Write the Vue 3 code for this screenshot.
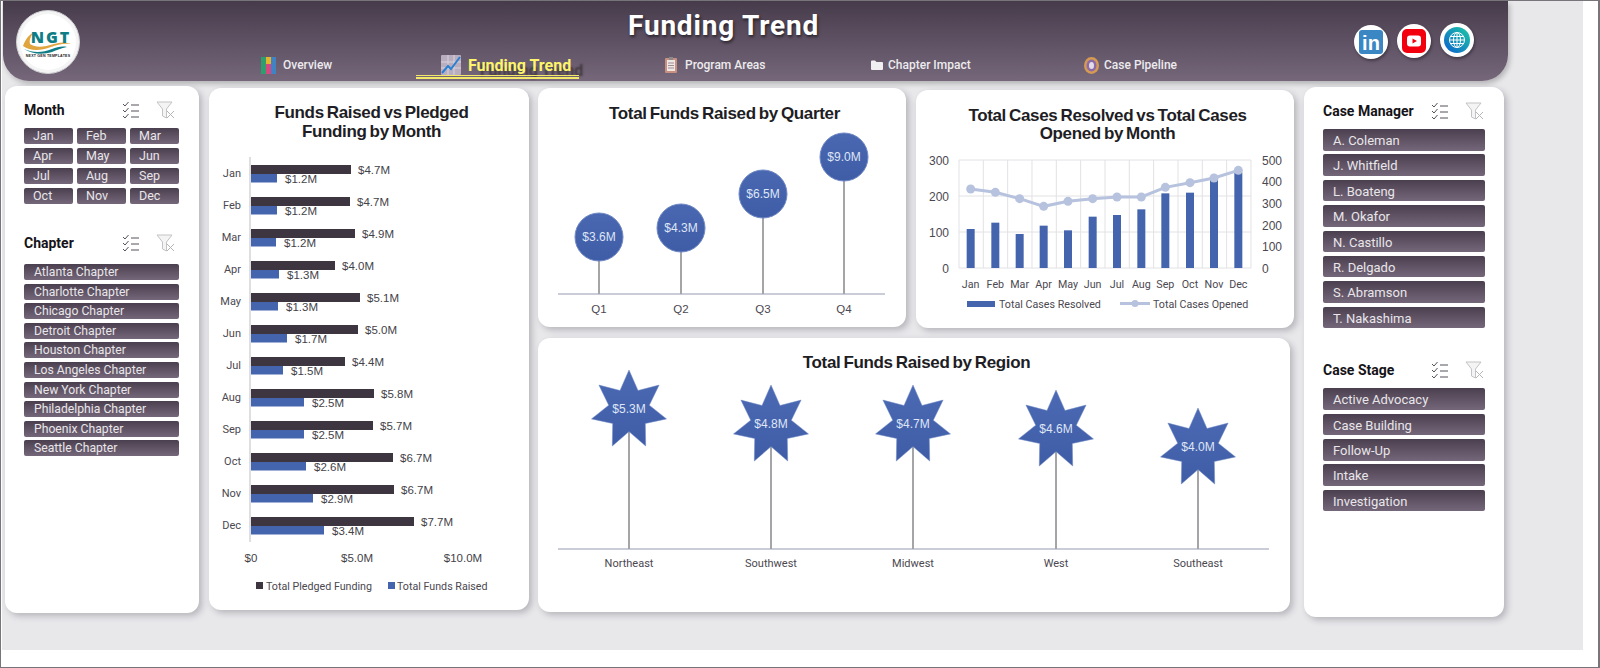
<template>
  <div class="shell">
    <div class="canvas">
      <header class="header">
        <div class="logo">
          <svg width="64" height="64" viewBox="0 0 64 64">
            <circle cx="32" cy="32" r="31.5" fill="#f4f4f4" stroke="#cfcfd2" />
            <circle cx="32" cy="32" r="28" fill="#fff" />
            <path d="M7 36c3-8 6-11 10-13-3 4-4 8-3 11 6 4 14 3 24 0 6-2 12-2 17 0-8-1-14 1-20 3-11 4-21 4-28-1z" fill="#e0a53f" />
            <path d="M8 39c9 4 18 4 28 0 5-2 10-3 15-2-6 1-10 3-15 5-10 3-20 2-28-3z" fill="#0f7d86" />
            <text x="35" y="33" class="logo-mark" text-anchor="middle">NGT</text>
            <text x="32" y="47" class="logo-sub" text-anchor="middle">NEXT GEN TEMPLATES</text>
          </svg>
        </div>
        <div class="head-mid">
          <h1 class="page-title">Funding Trend</h1>
          <nav class="nav">
            <a class="nav-item">
              <svg width="15" height="17" viewBox="0 0 15 17">
                <rect x="0" y="0" width="5" height="17" fill="#2f9e6e" />
                <rect x="5" y="0" width="5" height="7" fill="#e6b32e" />
                <rect x="5" y="7" width="5" height="10" fill="#d8477e" />
                <rect x="10" y="0" width="5" height="17" fill="#3f83c4" />
              </svg>
              <span>Overview</span>
            </a>
            <a class="nav-item active">
              <svg width="20" height="20" viewBox="0 0 20 20">
                <rect x="0" y="0" width="20" height="20" rx="1" fill="#b9aebf" />
                <path d="M0 7h20M0 13h20M7 0v20M13 0v20" stroke="#d8d2dc" stroke-width="1" />
                <path d="M1 18l6-7 3 3 9-12" fill="none" stroke="#2a7fd0" stroke-width="2" />
              </svg>
              <span>Funding Trend</span>
            </a>
            <a class="nav-item">
              <svg width="12" height="16" viewBox="0 0 12 16">
                <rect x="0" y="1" width="12" height="15" rx="1" fill="#c98f80" />
                <rect x="2" y="3" width="8" height="11" fill="#efe7e4" />
                <rect x="4" y="0" width="4" height="3" fill="#8a8a8a" />
                <path d="M3 6h6M3 8.500h6M3 11h6" stroke="#9b8f95" stroke-width="1" />
              </svg>
              <span>Program Areas</span>
            </a>
            <a class="nav-item">
              <svg width="12" height="10" viewBox="0 0 12 10">
                <path d="M0 1.500a1 1 0 0 1 1-1h3l1.500 1.500h5.500a1 1 0 0 1 1 1v6a1 1 0 0 1-1 1h-10a1 1 0 0 1-1-1z" fill="#f1eff2" />
              </svg>
              <span>Chapter Impact</span>
            </a>
            <a class="nav-item">
              <svg width="15" height="17" viewBox="0 0 15 17">
                <ellipse cx="7.500" cy="8.500" rx="7.500" ry="8.500" fill="#d69b52" />
                <ellipse cx="7.500" cy="8.500" rx="5" ry="6" fill="#8c6aa8" />
                <ellipse cx="7.500" cy="8.500" rx="2.500" ry="3.500" fill="#e4dbe8" />
              </svg>
              <span>Case Pipeline</span>
            </a>
          </nav>
        </div>
        <div class="socials">
          <div class="social">
            <svg width="24" height="24" viewBox="0 0 24 24">
              <rect width="24" height="24" rx="3" fill="#3b87c4" />
              <text x="12" y="20" class="in-mark" text-anchor="middle">in</text>
            </svg>
          </div>
          <div class="social up1">
            <svg width="24" height="24" viewBox="0 0 24 24">
              <rect width="24" height="24" rx="5" fill="#f3000f" />
              <rect x="5" y="6.500" width="14" height="11" rx="3" fill="#fff" />
              <path d="M10.500 9.500l4.500 2.500-4.500 2.500z" fill="#f3000f" />
            </svg>
          </div>
          <div class="social up2">
            <svg width="26" height="26" viewBox="0 0 26 26">
              <defs>
                <linearGradient id="webGrad" x1="1" y1="0" x2="0" y2="1">
                  <stop offset="0" stop-color="#1fc9a4" />
                  <stop offset="1" stop-color="#0b5fd0" />
                </linearGradient>
              </defs>
              <circle cx="13" cy="13" r="13" fill="url(#webGrad)" />
              <g fill="none" stroke="#fff" stroke-width="1">
                <circle cx="13" cy="13" r="7.500" />
                <ellipse cx="13" cy="13" rx="3.500" ry="7.500" />
                <path d="M13 5.500v15M5.500 13h15M6.500 9.500h13M6.500 16.500h13" />
              </g>
            </svg>
          </div>
        </div>
      </header>

      <main class="main">
        <aside class="panel panel-left">
          <div class="slicer-head">
            <h2>Month</h2>
            <svg class="tool" width="18" height="18" viewBox="0 0 18 18"><path d="M1 3l2 2 3.500-4M1 9l2 2 3.500-4M1 15l2 2 3.500-4M9 4h8M9 10h8M9 16h8" fill="none" stroke="#55505a" stroke-width="1" /></svg>
            <svg class="tool" width="19" height="18" viewBox="0 0 19 18"><path d="M1 1h15l-5.500 7v9l-4-2v-7z" fill="#f4f4f5" stroke="#c3c3c6" /><path d="M11 10l7 7M18 10l-7 7" stroke="#b5b5b8" /></svg>
          </div>
          <div class="month-grid">
            <button v-for="m in months" :key="m" class="chip">{{ m }}</button>
          </div>
          <div class="slicer-head chapter-head">
            <h2>Chapter</h2>
            <svg class="tool" width="18" height="18" viewBox="0 0 18 18"><path d="M1 3l2 2 3.500-4M1 9l2 2 3.500-4M1 15l2 2 3.500-4M9 4h8M9 10h8M9 16h8" fill="none" stroke="#55505a" stroke-width="1" /></svg>
            <svg class="tool" width="19" height="18" viewBox="0 0 19 18"><path d="M1 1h15l-5.500 7v9l-4-2v-7z" fill="#f4f4f5" stroke="#c3c3c6" /><path d="M11 10l7 7M18 10l-7 7" stroke="#b5b5b8" /></svg>
          </div>
          <div class="chapter-list">
            <button v-for="c in chapters" :key="c" class="chip row">{{ c }}</button>
          </div>
        </aside>

        <section class="card card-funds">
          <h3 class="card-title">Funds Raised vs Pledged<br />Funding by Month</h3>
          <svg class="chart" width="319" height="469" viewBox="209 141 319 469">
            <line x1="250" y1="157" x2="250" y2="542" stroke="#d4d4d8" stroke-width="1.500" />
            <g v-for="(r, i) in fundRows" :key="r.m">
              <text :x="241" :y="177 + i * 32" class="axis" text-anchor="end">{{ r.m }}</text>
              <rect x="251" :y="165 + i * 32" :width="r.dw" height="9" fill="#3d3540" />
              <rect x="251" :y="174 + i * 32" :width="r.bw" height="8.500" fill="#4464ad" />
              <text :x="258 + r.dw" :y="174 + i * 32" class="val">{{ r.d }}</text>
              <text :x="259 + r.bw" :y="183 + i * 32" class="val">{{ r.b }}</text>
            </g>
            <text x="251" y="562" class="val" text-anchor="middle">$0</text>
            <text x="357" y="562" class="val" text-anchor="middle">$5.0M</text>
            <text x="463" y="562" class="val" text-anchor="middle">$10.0M</text>
            <rect x="256" y="582" width="7" height="7" fill="#3d3540" />
            <text x="266" y="590" class="legend">Total Pledged Funding</text>
            <rect x="388" y="582" width="7" height="7" fill="#4464ad" />
            <text x="397" y="590" class="legend">Total Funds Raised</text>
          </svg>
        </section>

        <div class="mid">
          <div class="mid-top">
            <section class="card card-quarter">
              <h3 class="card-title">Total Funds Raised by Quarter</h3>
              <svg class="chart" width="368" height="204" viewBox="538 123 368 204">
                <defs>
                  <linearGradient id="ballGrad" x1="0" y1="0" x2="0" y2="1">
                    <stop offset="0" stop-color="#4a68b2" />
                    <stop offset="1" stop-color="#3f5ca6" />
                  </linearGradient>
                </defs>
                <line x1="558" y1="294" x2="885" y2="294" stroke="#b8bccb" stroke-width="1.500" />
                <g v-for="q in quarters" :key="q.l">
                  <line :x1="q.x" :y1="q.y" :x2="q.x" y2="294" stroke="#a5a5a8" stroke-width="2" />
                  <circle :cx="q.x" :cy="q.y" r="24" fill="url(#ballGrad)" stroke="#6f88c4" stroke-width="1" />
                  <text :x="q.x" :y="q.y + 4" class="ball" text-anchor="middle">{{ q.v }}</text>
                  <text :x="q.x" y="313" class="tick" text-anchor="middle">{{ q.l }}</text>
                </g>
              </svg>
            </section>

            <section class="card card-cases">
              <h3 class="card-title">Total Cases Resolved vs Total Cases<br />Opened by Month</h3>
              <svg class="chart" width="378" height="185" viewBox="916 143 378 185">
                <g stroke="#e2e2e5" stroke-width="1">
                  <line v-for="y in [160, 196, 232, 268]" :key="y" x1="959" :y1="y" x2="1251" :y2="y" />
                  <line v-for="n in 13" :key="n" :x1="959 + (n - 1) * 24.330" y1="160" :x2="959 + (n - 1) * 24.330" y2="268" />
                </g>
                <text v-for="t in leftTicks" :key="t.v" x="949" :y="t.y" class="tick-lg" text-anchor="end">{{ t.v }}</text>
                <text v-for="t in rightTicks" :key="t.v" x="1262" :y="t.y" class="tick-lg">{{ t.v }}</text>
                <rect v-for="c in caseRows" :key="c.m" :x="c.x - 4" :y="c.top" width="8" :height="268 - c.top" fill="#4464ad" />
                <polyline :points="linePoints" fill="none" stroke="#b6c2de" stroke-width="3" />
                <circle v-for="c in caseRows" :key="'p' + c.m" :cx="c.x" :cy="c.ly" r="4.500" fill="#b6c2de" />
                <text v-for="c in caseRows" :key="'l' + c.m" :x="c.x" y="288" class="legend" text-anchor="middle">{{ c.m }}</text>
                <rect x="967" y="301" width="28" height="6" fill="#4464ad" />
                <text x="999" y="308" class="legend">Total Cases Resolved</text>
                <line x1="1120" y1="303.500" x2="1150" y2="303.500" stroke="#b6c2de" stroke-width="3" />
                <circle cx="1135" cy="303.500" r="3.500" fill="#b6c2de" />
                <text x="1153" y="308" class="legend">Total Cases Opened</text>
              </svg>
            </section>
          </div>

          <section class="card card-region">
            <h3 class="card-title">Total Funds Raised by Region</h3>
            <svg class="chart" width="752" height="242" viewBox="538 369 752 242">
              <defs>
                <linearGradient id="starGrad" x1="0" y1="0" x2="0" y2="1">
                  <stop offset="0" stop-color="#4c6ab4" />
                  <stop offset="1" stop-color="#3f5ca6" />
                </linearGradient>
              </defs>
              <line x1="558" y1="548" x2="1269" y2="548" stroke="#b8bccb" stroke-width="1.500" />
              <g v-for="s in regions" :key="s.l">
                <line :x1="s.x" :y1="s.y + 20" :x2="s.x" y2="548" stroke="#a5a5a8" stroke-width="2" />
                <polygon :points="starPoints(s.x, s.y)" fill="url(#starGrad)" stroke="#6f88c4" stroke-width="0.500" />
                <text :x="s.x" :y="s.y + 3" class="ball" text-anchor="middle">{{ s.v }}</text>
                <text :x="s.x" y="566" class="legend lg" text-anchor="middle">{{ s.l }}</text>
              </g>
            </svg>
          </section>
        </div>

        <aside class="panel panel-right">
          <div class="slicer-head">
            <h2>Case Manager</h2>
            <svg class="tool" width="18" height="18" viewBox="0 0 18 18"><path d="M1 3l2 2 3.500-4M1 9l2 2 3.500-4M1 15l2 2 3.500-4M9 4h8M9 10h8M9 16h8" fill="none" stroke="#55505a" stroke-width="1" /></svg>
            <svg class="tool" width="19" height="18" viewBox="0 0 19 18"><path d="M1 1h15l-5.500 7v9l-4-2v-7z" fill="#f4f4f5" stroke="#c3c3c6" /><path d="M11 10l7 7M18 10l-7 7" stroke="#b5b5b8" /></svg>
          </div>
          <div class="tall-list">
            <button v-for="c in managers" :key="c" class="chip row tall">{{ c }}</button>
          </div>
          <div class="slicer-head stage-head">
            <h2>Case Stage</h2>
            <svg class="tool" width="18" height="18" viewBox="0 0 18 18"><path d="M1 3l2 2 3.500-4M1 9l2 2 3.500-4M1 15l2 2 3.500-4M9 4h8M9 10h8M9 16h8" fill="none" stroke="#55505a" stroke-width="1" /></svg>
            <svg class="tool" width="19" height="18" viewBox="0 0 19 18"><path d="M1 1h15l-5.500 7v9l-4-2v-7z" fill="#f4f4f5" stroke="#c3c3c6" /><path d="M11 10l7 7M18 10l-7 7" stroke="#b5b5b8" /></svg>
          </div>
          <div class="tall-list stage-list">
            <button v-for="c in stages" :key="c" class="chip row tall">{{ c }}</button>
          </div>
        </aside>
      </main>
    </div>
  </div>
</template>

<script setup>
import { computed } from 'vue'

const months = ['Jan', 'Feb', 'Mar', 'Apr', 'May', 'Jun', 'Jul', 'Aug', 'Sep', 'Oct', 'Nov', 'Dec']
const chapters = ['Atlanta Chapter', 'Charlotte Chapter', 'Chicago Chapter', 'Detroit Chapter', 'Houston Chapter', 'Los Angeles Chapter', 'New York Chapter', 'Philadelphia Chapter', 'Phoenix Chapter', 'Seattle Chapter']
const managers = ['A. Coleman', 'J. Whitfield', 'L. Boateng', 'M. Okafor', 'N. Castillo', 'R. Delgado', 'S. Abramson', 'T. Nakashima']
const stages = ['Active Advocacy', 'Case Building', 'Follow-Up', 'Intake', 'Investigation']

const fundRows = [
  ['Jan', 100, 26, '$4.7M', '$1.2M'], ['Feb', 99, 26, '$4.7M', '$1.2M'], ['Mar', 104, 25, '$4.9M', '$1.2M'],
  ['Apr', 84, 28, '$4.0M', '$1.3M'], ['May', 109, 27, '$5.1M', '$1.3M'], ['Jun', 107, 36, '$5.0M', '$1.7M'],
  ['Jul', 94, 32, '$4.4M', '$1.5M'], ['Aug', 123, 53, '$5.8M', '$2.5M'], ['Sep', 122, 53, '$5.7M', '$2.5M'],
  ['Oct', 142, 55, '$6.7M', '$2.6M'], ['Nov', 143, 62, '$6.7M', '$2.9M'], ['Dec', 163, 73, '$7.7M', '$3.4M'],
].map(([m, dw, bw, d, b]) => ({ m, dw, bw, d, b }))

const quarters = [
  { l: 'Q1', v: '$3.6M', x: 599, y: 237 },
  { l: 'Q2', v: '$4.3M', x: 681, y: 228 },
  { l: 'Q3', v: '$6.5M', x: 763, y: 194 },
  { l: 'Q4', v: '$9.0M', x: 844, y: 157 },
]

const leftTicks = [{ v: 300, y: 165 }, { v: 200, y: 201 }, { v: 100, y: 237 }, { v: 0, y: 273 }]
const rightTicks = [{ v: 500, y: 165 }, { v: 400, y: 186 }, { v: 300, y: 208 }, { v: 200, y: 230 }, { v: 100, y: 251 }, { v: 0, y: 273 }]

const barTop = [432, 413, 447, 422, 436, 395, 390, 373, 325, 323, 285, 262]
const lineTop = [312, 322, 341, 364, 349, 341, 336, 336, 307, 293, 279, 256]
const barX = [182, 256, 329, 401, 474, 548, 621, 694, 766, 840, 912, 985]
const caseRows = months.map((m, i) => ({
  m,
  x: 910 + barX[i] / 3,
  top: 85 + barTop[i] / 3,
  ly: 85 + lineTop[i] / 3,
}))
const linePoints = computed(() => caseRows.map((c) => `${c.x},${c.ly}`).join(' '))

const regions = [
  { l: 'Northeast', v: '$5.3M', x: 629, y: 409 },
  { l: 'Southwest', v: '$4.8M', x: 771, y: 424 },
  { l: 'Midwest', v: '$4.7M', x: 913, y: 424 },
  { l: 'West', v: '$4.6M', x: 1056, y: 429 },
  { l: 'Southeast', v: '$4.0M', x: 1198, y: 447 },
]

// seven point star, a bit taller than wide like the Excel marker
const starPoints = (cx, cy) => {
  const pts = []
  for (let i = 0; i < 14; i++) {
    const a = (i * Math.PI) / 7
    const k = i % 2 === 0 ? 1 : 0.54
    pts.push(`${(cx + Math.sin(a) * 38.5 * k).toFixed(1)},${(cy - Math.cos(a) * 40 * k).toFixed(1)}`)
  }
  return pts.join(' ')
}
</script>

<style scoped>
.shell {
  width: 1600px;
  height: 668px;
  box-sizing: border-box;
  border: 1px solid #77757a;
  border-width: 1px 2px 1px 1px;
  background: #fff;
  overflow: hidden;
  font-family: Roboto, "Liberation Sans", sans-serif;
}

.canvas {
  margin-left: 1px;
  width: 1581px;
  height: 649px;
  background: #e8e7ea;
}

.header {
  margin-left: 1px;
  width: 1505px;
  height: 80px;
  box-sizing: border-box;
  display: flex;
  border-radius: 0 0 26px 26px;
  background: linear-gradient(#463b4b, #76677b);
  box-shadow: 2px 3px 5px rgba(0, 0, 0, 0.22);
}

.logo {
  width: 64px;
  height: 64px;
  margin: 9px 0 0 13px;
  flex: none;
}

.logo-mark {
  font: 800 16px "Open Sans", sans-serif;
  letter-spacing: 2px;
  fill: #0f7d86;
}

.logo-sub {
  font: 700 3.600px "Liberation Sans", sans-serif;
  letter-spacing: 0.200px;
  fill: #222;
}

.head-mid {
  flex: 1;
  min-width: 0;
}

.page-title {
  margin: 9px 0 0;
  width: 1287px;
  text-align: center;
  height: 32px;
  font: 700 28px/32px Roboto, sans-serif;
  letter-spacing: 0.800px;
  color: #fff;
  text-shadow: 1px 2px 3px rgba(0, 0, 0, 0.55);
}

.nav {
  margin: 11px 0 0 181px;
  display: grid;
  grid-template-columns: 180px 224px 206px 213px auto;
  align-items: center;
  height: 24px;
}

.nav-item {
  display: flex;
  align-items: center;
  gap: 7px;
  font: 500 12px Roboto, sans-serif;
  color: #ecebed;
  position: relative;
}

.nav-item:nth-child(3) {
  gap: 8px;
}

.nav-item:nth-child(4),
.nav-item:nth-child(5) {
  gap: 5px;
}

.nav-item.active {
  gap: 7px;
  font-weight: 700;
  font-size: 16px;
  color: #fdf56b;
  text-shadow: 12px 5px 2px rgba(30, 25, 20, 0.55);
}

.nav-item.active::after {
  content: "";
  position: absolute;
  left: -25px;
  width: 163px;
  top: 20px;
  height: 4px;
  box-sizing: border-box;
  border-top: 1px solid #f2e86a;
  border-bottom: 2px solid #f2e86a;
}

.socials {
  display: flex;
  gap: 9px;
  align-items: flex-start;
  margin: 24px 34px 0 0;
}

.social {
  width: 34px;
  height: 34px;
  border-radius: 50%;
  background: #fff;
  display: flex;
  align-items: center;
  justify-content: center;
  box-shadow: 1px 2px 3px rgba(0, 0, 0, 0.35);
}

.social.up1 {
  margin-top: -1px;
}

.social.up2 {
  margin-top: -2px;
}

.in-mark {
  font: 700 20px "Liberation Sans", sans-serif;
  fill: #fff;
}

.main {
  display: flex;
  align-items: flex-start;
  margin-top: 5px;
  margin-left: 3px;
}

.panel,
.card {
  background: #fff;
  border-radius: 12px;
  box-shadow: 3px 3px 6px rgba(70, 70, 80, 0.3);
}

.panel-left {
  width: 194px;
  height: 527px;
  box-sizing: border-box;
  padding: 13px 20px 0 19px;
  flex: none;
}

.panel-left .slicer-head {
  padding-right: 4px;
}

.slicer-head {
  display: flex;
  align-items: center;
  height: 22px;
}

.slicer-head h2 {
  margin: 0;
  flex: 1;
  font: 700 14px Roboto, sans-serif;
  color: #151318;
}

.tool {
  margin-left: 16px;
  flex: none;
}

.month-grid {
  margin-top: 7px;
  display: grid;
  grid-template-columns: repeat(3, 49px);
  gap: 4px;
  grid-auto-rows: 16px;
}

.chip {
  display: block;
  border: 0;
  padding: 0 0 0 9px;
  border-radius: 2px;
  background: linear-gradient(#4a3f4f, #75677a);
  color: #e9e6ea;
  font: 400 12.500px/16px Roboto, sans-serif;
  text-align: left;
  white-space: nowrap;
}

.chapter-head {
  margin-top: 28px;
}

.chapter-list {
  margin-top: 10px;
  display: grid;
  grid-auto-rows: 16px;
  row-gap: 3.600px;
}

.chip.row {
  padding-left: 10px;
  font-size: 12.200px;
}

.card-funds {
  margin-left: 10px;
  margin-top: 2px;
  width: 320px;
  height: 522px;
  flex: none;
}

.mid {
  margin-left: 9px;
  margin-top: 2px;
  width: 757px;
  flex: none;
}

.mid-top {
  display: flex;
  align-items: flex-start;
  gap: 10px;
}

.card-quarter {
  width: 368px;
  height: 239px;
}

.card-cases {
  margin-top: 2px;
  width: 378px;
  height: 238px;
}

.card-region {
  margin-top: 10px;
  width: 752px;
  height: 274px;
}

.card-title {
  margin: 0;
  padding-left: 5px;
  text-align: center;
  font: 700 17px/19px "Liberation Sans", sans-serif;
  letter-spacing: -0.350px;
  word-spacing: -1.300px;
  color: #211d24;
}

.card-funds .card-title {
  padding-top: 15px;
  height: 38px;
}

.card-quarter .card-title {
  padding-top: 16px;
}

.card-cases .card-title {
  padding-top: 17px;
  height: 36px;
  line-height: 18px;
}

.card-region .card-title {
  padding-top: 16px;
  height: 16px;
  line-height: 18px;
}

.chart {
  display: block;
}

.axis,
.legend {
  font: 400 10.700px Roboto, sans-serif;
  fill: #4b4850;
}

.legend.lg {
  font-size: 11px;
}

.axis {
  font-size: 11px;
}

.val {
  font: 400 11.500px "Liberation Sans", sans-serif;
  fill: #444247;
}

.ball {
  font: 400 12px "Liberation Sans", sans-serif;
  fill: #dfe6f5;
}

.tick {
  font: 400 11.500px "Liberation Sans", sans-serif;
  fill: #4b4850;
}

.tick-lg {
  font: 400 12px "Liberation Sans", sans-serif;
  fill: #4b4850;
}

.panel-right {
  margin-left: 9px;
  margin-top: 1px;
  width: 200px;
  height: 530px;
  box-sizing: border-box;
  padding: 13px 19px 0;
  flex: none;
}

.panel-right .slicer-head {
  padding-right: 1px;
}

.tall-list {
  margin-top: 7px;
  display: grid;
  grid-auto-rows: 21.500px;
  row-gap: 3.900px;
}

.chip.tall {
  line-height: 23px;
  font-size: 13px;
}

.stage-head {
  margin-top: 31px;
}

.tall-list.stage-list {
  margin-top: 7px;
}
</style>

<style>
html,
body {
  margin: 0;
  background: #fff;
}
</style>
